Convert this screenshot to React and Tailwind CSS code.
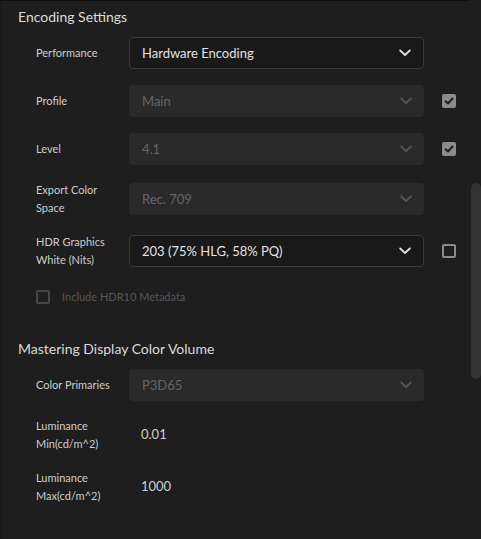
import React from "react";

const Chevron = ({ disabled }) => (
  <svg width="12" height="8" viewBox="0 0 12 8" className="shrink-0">
    <path
      d="M1.2 1.5 L6 6 L10.8 1.5"
      fill="none"
      stroke={disabled ? "#555555" : "#dcdcdc"}
      strokeWidth="1.9"
      strokeLinecap="round"
      strokeLinejoin="round"
    />
  </svg>
);

const Select = ({ value, disabled }) => (
  <div
    className={
      "w-[295px] h-[32px] rounded-[4px] flex items-center justify-between pr-[12px] shrink-0 " +
      (disabled
        ? "bg-[#2a2a2a] text-[#656565] pl-[13px]"
        : "bg-[#191919] border border-[#3a3a3a] text-[#e2e2e2] pl-[12px]")
    }
  >
    <span className="text-[13px] leading-none">{value}</span>
    <Chevron disabled={disabled} />
  </div>
);

const Check = ({ checked, disabled }) => {
  if (checked)
    return (
      <div className="w-[14px] h-[14px] rounded-[2px] bg-[#8c8c8c] flex items-center justify-center shrink-0">
        <svg width="10" height="10" viewBox="0 0 10 10">
          <path d="M1.6 5.2 L4 7.5 L8.6 2.5" fill="none" stroke="#1e1e1e" strokeWidth="1.9" strokeLinecap="round" strokeLinejoin="round" />
        </svg>
      </div>
    );
  return (
    <div
      className={
        "w-[14px] h-[14px] rounded-[2px] border-2 shrink-0 " +
        (disabled ? "border-[#474747]" : "border-[#8c8c8c]")
      }
    />
  );
};

const Row = ({ label, children, check }) => (
  <div className="flex items-center min-h-[32px]">
    <div className="w-[93px] pl-[34px] shrink-0 box-content text-[11px] leading-[18px] text-[#cdcdcd]">
      {label}
    </div>
    {children}
    {check !== undefined && (
      <div className="ml-[18px]">
        <Check checked={check} />
      </div>
    )}
  </div>
);

export default function App() {
  return (
    <div
      className="w-[481px] h-[539px] bg-[#1e1e1e] flex overflow-hidden relative"
      style={{ fontFamily: "Lato, 'Liberation Sans', sans-serif" }}
    >
      <div className="absolute top-0 left-0 w-[470px] h-[1px] bg-[#101010]" />
      <div className="w-[2px] bg-[#191919] shrink-0" />
      <div className="flex-1 flex flex-col">
        <div className="pl-[16px] pt-[7px] h-[27px] text-[14px] leading-[20px] text-[#dadada]">
          Encoding Settings
        </div>
        <div className="flex flex-col gap-[16px] mt-[10px]">
          <Row label="Performance">
            <Select value="Hardware Encoding" />
          </Row>
          <Row label="Profile" check={true}>
            <Select value="Main" disabled />
          </Row>
          <Row label="Level" check={true}>
            <Select value="4.1" disabled />
          </Row>
          <Row label={<>Export Color<br />Space</>}>
            <Select value="Rec. 709" disabled />
          </Row>
          <Row label={<>HDR Graphics<br />White (Nits)</>} check={false}>
            <Select value="203 (75% HLG, 58% PQ)" />
          </Row>
        </div>
        <div className="flex items-center h-[18px] mt-[19px] pl-[34px] gap-[12px]">
          <Check disabled />
          <span className="text-[11px] text-[#575757]">Include HDR10 Metadata</span>
        </div>
        <div className="pl-[16px] mt-[33px] h-[20px] text-[14px] leading-[20px] text-[#dadada]">
          Mastering Display Color Volume
        </div>
        <div className="flex flex-col gap-[16px] mt-[10px]">
          <Row label="Color Primaries">
            <Select value="P3D65" disabled />
          </Row>
          <Row label={<>Luminance<br />Min(cd/m^2)</>}>
            <span className="pl-[12px] text-[13px] text-[#cfcfcf]">0.01</span>
          </Row>
          <Row label={<>Luminance<br />Max(cd/m^2)</>}>
            <span className="pl-[12px] text-[13px] text-[#cfcfcf]">1000</span>
          </Row>
        </div>
      </div>
      <div className="absolute right-0 top-[183px] w-[10px] h-[196px] rounded-[5px] bg-[#333333]" />
    </div>
  );
}
